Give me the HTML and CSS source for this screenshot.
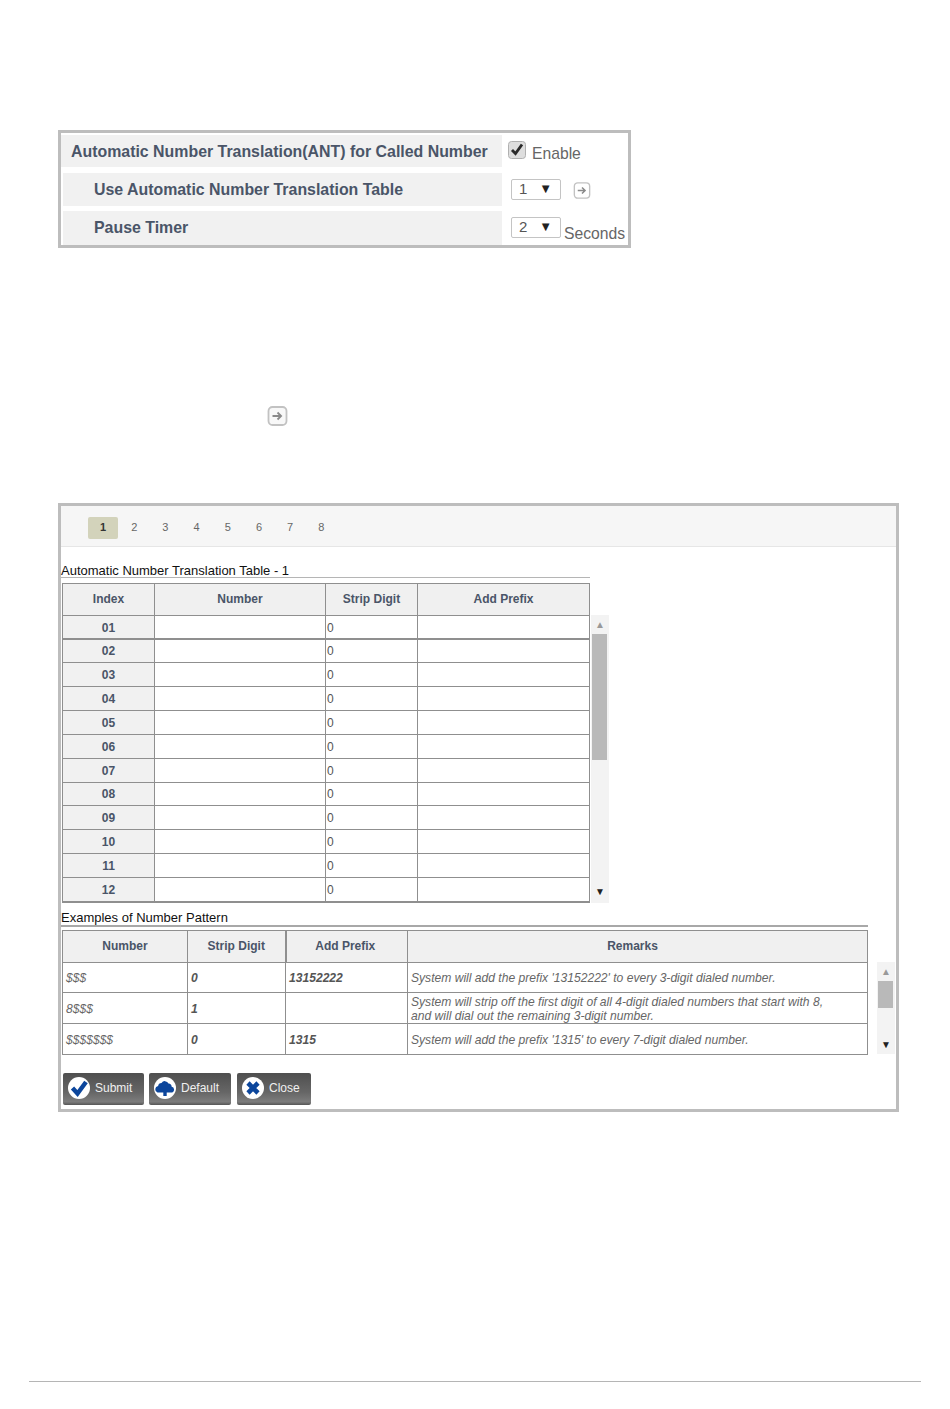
FILE: index.html
```html
<!DOCTYPE html>
<html lang="en">
<head>
<meta charset="utf-8">
<title>Automatic Number Translation</title>
<link rel="stylesheet" href="styles.css">
</head>
<body>
<section class="panel settings">
  <div class="set-row">
    <div class="set-label top">Automatic Number Translation(ANT) for Called Number</div>
    <div class="set-value"><span class="check"><svg viewBox="0 0 18 18" width="18" height="18"><rect x="0.5" y="0.5" width="17" height="17" rx="3" fill="#dedede" stroke="#b0b0b0"/><path d="M4 9l3.5 3.6L14 3.5" fill="none" stroke="#2a2a2a" stroke-width="2.8"/></svg></span><span class="unit enable">Enable</span></div>
  </div>
  <div class="set-row mid">
    <div class="set-label sub">Use Automatic Number Translation Table</div>
    <div class="set-value pick"><span class="select"><span>1</span><i class="caret">▼</i></span><svg class="go small" viewBox="0 0 20 20"><rect x="1" y="1" width="18" height="18" rx="4" fill="#fff" stroke="#c2c2c2" stroke-width="1.6"/><path d="M5 10h8M10 6.5l3.6 3.5-3.6 3.5" fill="none" stroke="#8a8a8a" stroke-width="1.8"/></svg></div>
  </div>
  <div class="set-row low">
    <div class="set-label sub">Pause Timer</div>
    <div class="set-value pick"><span class="select"><span>2</span><i class="caret">▼</i></span><span class="unit seconds">Seconds</span></div>
  </div>
</section>

<svg class="go lone" viewBox="0 0 20 20"><rect x="1" y="1" width="18" height="18" rx="4" fill="#f8f8f8" stroke="#c2c2c2" stroke-width="1.8"/><path d="M5 10h8M10 6.5l3.6 3.5-3.6 3.5" fill="none" stroke="#8a8a8a" stroke-width="1.8"/></svg>

<section class="panel editor">
  <nav class="tabs">
    <span class="tab on">1</span><span class="tab">2</span><span class="tab">3</span><span class="tab">4</span><span class="tab">5</span><span class="tab">6</span><span class="tab">7</span><span class="tab">8</span>
  </nav>
  <h2 class="cap cap-one">Automatic Number Translation Table - 1</h2>
  <div class="scroll-wrap one">
    <table class="grid ant">
      <colgroup><col class="c1"><col class="c2"><col class="c3"><col class="c4"></colgroup>
      <thead><tr><th>Index</th><th>Number</th><th>Strip Digit</th><th>Add Prefix</th></tr></thead>
      <tbody>
        <tr class="heavy"><td class="idx">01</td><td></td><td>0</td><td></td></tr>
        <tr class="short"><td class="idx">02</td><td></td><td>0</td><td></td></tr>
        <tr><td class="idx">03</td><td></td><td>0</td><td></td></tr>
        <tr><td class="idx">04</td><td></td><td>0</td><td></td></tr>
        <tr><td class="idx">05</td><td></td><td>0</td><td></td></tr>
        <tr><td class="idx">06</td><td></td><td>0</td><td></td></tr>
        <tr><td class="idx">07</td><td></td><td>0</td><td></td></tr>
        <tr class="short"><td class="idx">08</td><td></td><td>0</td><td></td></tr>
        <tr><td class="idx">09</td><td></td><td>0</td><td></td></tr>
        <tr><td class="idx">10</td><td></td><td>0</td><td></td></tr>
        <tr><td class="idx">11</td><td></td><td>0</td><td></td></tr>
        <tr class="last"><td class="idx">12</td><td></td><td>0</td><td></td></tr>
      </tbody>
    </table>
    <div class="bar bar-one"><i class="up">▲</i><b class="thumb t-one"></b><i class="down">▼</i></div>
  </div>
  <h2 class="cap cap-two">Examples of Number Pattern</h2>
  <div class="scroll-wrap two">
    <table class="grid ex">
      <colgroup><col class="e1"><col class="e2"><col class="e3"><col class="e4"></colgroup>
      <thead><tr><th>Number</th><th>Strip Digit</th><th class="h-prefix">Add Prefix</th><th class="h-remarks">Remarks</th></tr></thead>
      <tbody>
        <tr class="r1"><td>$$$</td><td class="strong">0</td><td class="strong">13152222</td><td>System will add the prefix '13152222' to every 3-digit dialed number.</td></tr>
        <tr class="r2"><td>8$$$</td><td class="strong">1</td><td></td><td class="two-line">System will strip off the first digit of all 4-digit dialed numbers that start with 8,<br>and will dial out the remaining 3-digit number.</td></tr>
        <tr class="r2"><td>$$$$$$$</td><td class="strong">0</td><td class="strong">1315</td><td>System will add the prefix '1315' to every 7-digit dialed number.</td></tr>
      </tbody>
    </table>
    <div class="bar bar-two"><i class="up">▲</i><b class="thumb t-two"></b><i class="down">▼</i></div>
  </div>
  <div class="actions">
    <button class="btn b-submit"><span class="disc"><svg viewBox="0 0 22 22" width="22" height="22"><circle cx="11" cy="11" r="11" fill="#fff"/><path d="M4.5 11l5 5.5L18 5" fill="none" stroke="#0c469c" stroke-width="4.4"/></svg></span>Submit</button>
    <button class="btn b-default"><span class="disc"><svg viewBox="0 0 22 22" width="22" height="22"><circle cx="11" cy="11" r="11" fill="#fff"/><path d="M3.5 15.5a3.3 3.3 0 0 1 .6-6.4A3.6 3.6 0 0 1 7.5 6a4 4 0 0 1 7 .4 3.6 3.6 0 0 1 3.2 3.4 3 3 0 0 1 .6 5.7z" fill="#0c469c"/><path d="M11 14v5" stroke="#0c469c" stroke-width="3.4"/></svg></span>Default</button>
    <button class="btn b-close"><span class="disc"><svg viewBox="0 0 22 22" width="22" height="22"><circle cx="11" cy="11" r="11" fill="#fff"/><path d="M6 6l10 10M16 6L6 16" stroke="#0c469c" stroke-width="4.6"/></svg></span>Close</button>
  </div>
</section>
<hr class="foot">
</body>
</html>
```
FILE: styles.css
```css
html, body { margin: 0; padding: 0; background: #fff; }
body {
  width: 950px; height: 1409px; overflow: hidden;
  padding-top: 130px; box-sizing: border-box;
  font-family: "Liberation Sans", Arial, sans-serif;
  color: #555;
}
.panel { border: 3px solid #bdbdbd; box-sizing: border-box; margin-left: 58px; background: #fff; }
.settings { width: 573px; height: 118px; padding-top: 2px; }
.set-row { display: flex; height: 32px; }
.set-row.mid { height: 33px; margin-top: 6px; }
.set-row.low { height: 34px; margin-top: 5px; }
.set-label {
  width: 441px; box-sizing: border-box; background: #f1f1f1;
  font-size: 15.9px; font-weight: bold; color: #4a5568; line-height: 33px;
}
.set-label.top { padding-left: 10px; }
.set-label.sub { margin-left: 2px; width: 439px; padding-left: 31px; }
.set-value { display: flex; padding-left: 6px; flex: 1; position: relative; }
.set-value.pick { padding-left: 9px; padding-top: 6px; align-items: flex-start; }
.check { margin-top: 6px; height: 18px; }
.unit { font-size: 15.7px; color: #666; }
.enable { margin-left: 6px; margin-top: 10px; }
.seconds { margin-left: 3px; margin-top: 8px; }
.select {
  width: 50px; height: 21px; box-sizing: border-box; border: 1px solid #c4c4c4; border-radius: 2px;
  display: flex; justify-content: space-between; align-items: center;
  padding: 0 8px 2px 7px; font-size: 15px; color: #555; background: #fff;
}
.caret { font-style: normal; font-size: 13px; color: #222; }
.go { display: block; }
.go.small { width: 18px; height: 17px; margin-left: 12px; margin-top: 3px; }
.go.lone { width: 21px; height: 20px; margin: 158px 0 77px 267px; }

.editor { width: 841px; height: 609px; }
.tabs {
  height: 41px; box-sizing: border-box; background: #f6f6f6; border-bottom: 1px solid #e6e6e6;
  display: flex; padding: 11px 0 0 27px; align-items: flex-start;
}
.tab { width: 30px; height: 22px; margin-right: 1.2px; text-align: center; font-size: 11px; line-height: 21px; color: #666; }
.tab.on { background: #d3d3bb; border-radius: 2px; color: #333; font-weight: bold; }
.cap { margin: 0; font-weight: normal; font-size: 13px; color: #111; }
.cap-one { margin-top: 16px; width: 529px; height: 14px; line-height: 15px; border-bottom: 1px solid #b5b5b5; }
.cap-two { margin-top: 7px; width: 807px; height: 15px; line-height: 16px; border-bottom: 2px solid #a8a8a8; }
.scroll-wrap { position: relative; margin-left: 1px; }
.scroll-wrap.one { height: 320px; margin-top: 5px; overflow: hidden; }
.scroll-wrap.two { height: 124px; margin-top: 3px; }
.grid { border-collapse: collapse; table-layout: fixed; background: #fff; }
.grid th, .grid td { border: 1px solid #8f8f8f; padding: 0; font-size: 11px; }
.grid th { height: 29px; padding-bottom: 2px; background: #f0f0f0; color: #4a5568; font-size: 12px; font-weight: bold; text-align: center; }
.ant { width: 527px; }
.c1 { width: 92px; } .c2 { width: 171px; } .c3 { width: 92px; } .c4 { width: 172px; }
.ant td { height: 23px; color: #555; font-size: 12px; padding-left: 1px; }
.ant tr.short td { height: 22px; }
.ant tr.heavy td { height: 21px; padding-top: 1px; border-bottom: 2px solid #8f8f8f; }
.ant td.idx { background: #f1f1f1; font-size: 12px; font-weight: bold; text-align: center; color: #4a5568; padding-left: 0; }
.ant tr.last td { border-bottom: 2px solid #8f8f8f; }
.bar { position: absolute; background: #f3f3f3; display: flex; flex-direction: column; align-items: center; }
.bar i { font-style: normal; font-size: 10px; line-height: 8px; color: #999; }
.bar .down { color: #222; margin-top: auto; }
.thumb { display: block; width: 15px; background: #b9b9b9; margin: 5px 1px 0 0; }
.bar-one { left: 529px; top: 32px; width: 18px; height: 288px; padding: 6px 0 7px; box-sizing: border-box; }
.t-one { height: 126px; }
.ex { width: 805px; }
.e1 { width: 125px; } .e2 { width: 98px; } .e3 { width: 122px; } .e4 { width: 460px; }
.ex th:nth-child(3) { border-left-width: 2px; }
.ex .h-prefix { padding-right: 3px; }
.ex .h-remarks { padding-right: 10px; }
.ex td { font-size: 12.1px; font-style: italic; color: #666; padding-left: 3px; }
.ex td.strong { font-weight: bold; color: #555; }
.ex td.two-line { line-height: 14px; }
.ex .r1 td { height: 29px; }
.ex .r2 td { height: 29px; padding-top: 1px; }
.bar-two { left: 815px; top: 32px; width: 18px; height: 92px; padding: 6px 0 5px; box-sizing: border-box; }
.t-two { height: 27px; }
.actions { display: flex; gap: 5px; margin: 19px 0 0 2px; }
.btn {
  height: 32px; border: 0; border-radius: 2px; padding: 0 0 2px 5px; display: flex; align-items: center;
  background: linear-gradient(#4f4f4f, #666 60%, #7c7c7c 90%, #555);
  font: 12px "Liberation Sans", Arial, sans-serif; color: #f0f0f0;
}
.disc { width: 22px; height: 22px; margin-right: 5px; display: block; }
.b-submit { width: 81px; }
.b-default { width: 82px; margin-right: 1px; }
.b-close { width: 74px; }
.foot { border: 0; border-top: 1px solid #b5b5b5; margin: 269px 0 0 29px; width: 892px; }
```
